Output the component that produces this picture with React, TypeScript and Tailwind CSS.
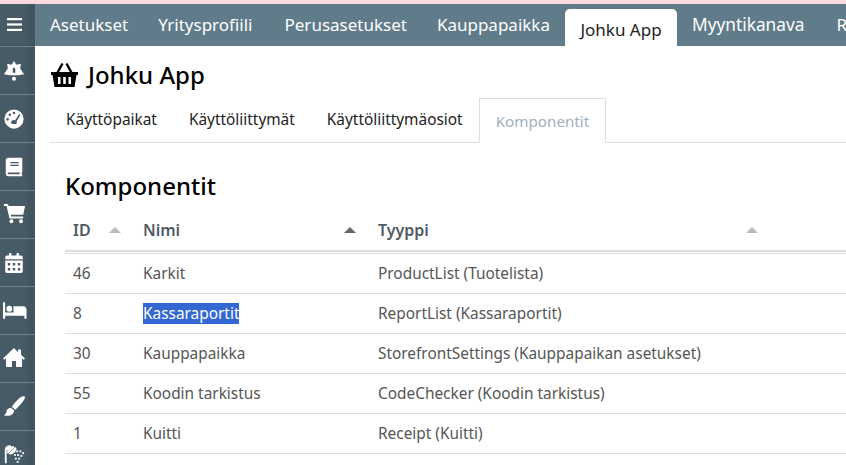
import type { ReactNode } from "react";
import { FaCalendarAlt } from "react-icons/fa";

function Ico({ w, y = 0, children }: { w: number; y?: number; children: ReactNode }) {
  return (
    <svg width={w} height={w} viewBox={`0 ${y} 24 24`} fill="currentColor">
      {children}
    </svg>
  );
}

const sideIcons: ReactNode[] = [
  <Ico w={22} key="a">
    <path fillRule="evenodd" d="M12 1l2.600 4.200L19.500 4l-.8 5.200L23 15.500l-6.500 1.200h-9L1 15.500l4.300-6.300L4.500 4l4.900 1.200zM12 8.500a1.400 1.400 0 0 0-1.400 1.400v4h2.800v-4A1.400 1.400 0 0 0 12 8.500z" />
    <circle cx="12" cy="20.500" r="2.200" />
  </Ico>,
  <Ico w={22} key="b">
    <path fillRule="evenodd" d="M12 1.500a10.500 10.500 0 1 0 0 21 10.500 10.500 0 0 0 0-21zM12 4a1.400 1.400 0 1 1 0 2.800A1.400 1.400 0 0 1 12 4zM7.500 6a1.400 1.400 0 1 1 0 2.800A1.400 1.400 0 0 1 7.500 6zM5 11a1.400 1.400 0 1 1 0 2.800A1.400 1.400 0 0 1 5 11zM17.600 6.600l1.400.9-4.200 7.200c.5 1 .3 2-.4 2.700H9.600c-1-1.100-.9-2.900.3-3.800.9-.7 2.200-.8 3.200-.1z" />
  </Ico>,
  <Ico w={22} key="c">
    <path fillRule="evenodd" d="M6 2h14a1 1 0 0 1 1 1v14.200c0 .4-.2.700-.5.900-.2.700-.2 1.300 0 2 .3.200.5.500.5.900v.5a.5.500 0 0 1-.5.500H6a3 3 0 0 1-3-3V5a3 3 0 0 1 3-3zM8 6.500v1.300h9V6.500zM8 9.500v1.300h9V9.500zM6 18c-.6 0-1 .4-1 1s.4 1 1 1h12.300c-.1-.7-.1-1.300 0-2z" />
  </Ico>,
  <Ico w={23} y={2} key="d">
    <path d="M1 3h4.200l.6 2.200H23l-1.900 9H8.100l.4 2H21v2H6.800L3.700 5H1z" />
    <circle cx="8.800" cy="21" r="2" />
    <circle cx="18.800" cy="21" r="2" />
  </Ico>,
  <FaCalendarAlt key="e" size={20} />,
  <Ico w={25} key="f">
    <path fillRule="evenodd" d="M1 4h2v10h8V8h9a3.500 3.500 0 0 1 3.500 3.500V20h-2v-3H3v3H1zM7 7.500a2.800 2.800 0 1 1 0 5.600 2.800 2.800 0 0 1 0-5.600z" />
  </Ico>,
  <Ico w={24} y={2} key="g">
    <path d="M12 3L1 13.500l1.300 1.300L4 13.200V22h6v-6h4v6h6v-8.800l1.700 1.600 1.300-1.300-4-3.800V4.500h-3v2.800z" />
  </Ico>,
  <Ico w={23} key="h">
    <path d="M22.500 1.500c-1.500-.8-3.500.2-5.500 2-2.800 2.500-5.800 6-7.800 8.800l3.600 3c2.800-2.500 6.300-6 8.300-9 1.500-2.300 2.500-3.800 1.400-4.800zM8 13.300c-2.800.3-4 2-4.300 4-.2 1.600-1 2.800-2.700 3.700 3 1.200 6.500 1 8.700-1 1.500-1.300 2-2.800 1.800-4z" />
  </Ico>,
  <Ico w={22} y={1} key="i">
    <path d="M2 22V7a4.500 4.500 0 0 1 7.800-3.100L11 3l1.500 1.500-7 7L4 10l1-1.200A2.500 2.500 0 0 0 4 7v15z" />
    <path d="M6 11.500L13.300 4.200c2 1.300 1.800 3.700-.3 5.800s-5 3.300-7 1.500z" />
    <rect x="14.500" y="8" width="2" height="2" />
    <rect x="18" y="8" width="2" height="2" />
    <rect x="21" y="10" width="2" height="2" />
    <rect x="12" y="12" width="2" height="2" />
    <rect x="15.500" y="12" width="2" height="2" />
    <rect x="19" y="13" width="2" height="2" />
    <rect x="13" y="16" width="2" height="2" />
    <rect x="16.500" y="16" width="2" height="2" />
    <rect x="15" y="19.500" width="2" height="2" />
  </Ico>,
];

const rows = [
  ["46", "Karkit", "ProductList (Tuotelista)"],
  ["8", "Kassaraportit", "ReportList (Kassaraportit)"],
  ["30", "Kauppapaikka", "StorefrontSettings (Kauppapaikan asetukset)"],
  ["55", "Koodin tarkistus", "CodeChecker (Koodin tarkistus)"],
  ["1", "Kuitti", "Receipt (Kuitti)"],
];

function Tri({ cls }: { cls: string }) {
  return <span className={`block w-0 h-0 border-x-[6px] border-x-transparent border-b-[6px] ${cls}`} />;
}

export default function App() {
  return (
    <div className="w-[846px] h-[465px] overflow-hidden bg-white flex flex-col font-['Noto_Sans','Open_Sans',sans-serif]">
      <div className="h-1 shrink-0 bg-[#fcd9de]" />
      <div className="flex flex-1 min-h-0">
        <aside className="w-[35px] shrink-0 bg-[#475b66] overflow-hidden">
          <div className="h-[42px] border-b border-[#3c4e58] flex text-white">
            <div className="w-[28px] flex items-center justify-center"><svg width="15" height="13" viewBox="0 0 15 13" fill="currentColor"><rect y="0" width="15" height="2.200" /><rect y="5.400" width="15" height="2.200" /><rect y="10.800" width="15" height="2.200" /></svg></div>
            <div className="flex-1 bg-[#42555f]" />
          </div>
          {sideIcons.map((icon, i) => (
            <div key={i} className="h-[48px] border-t border-[#6d828d] flex text-white">
              <div className="w-[28px] flex items-center justify-center">{icon}</div>
              <div className="flex-1 bg-[#42555f]" />
            </div>
          ))}
        </aside>
        <main className="flex-1 min-w-0 flex flex-col">
          <nav className="h-[42px] shrink-0 bg-[#607b89] flex items-end pl-[15px] whitespace-nowrap overflow-hidden text-white text-[17px]">
            <a className="shrink-0 h-[42px] leading-[42px] mr-[30px]">Asetukset</a>
            <a className="shrink-0 h-[42px] leading-[42px] mr-[32px]">Yritysprofiili</a>
            <a className="shrink-0 h-[42px] leading-[42px] mr-[30px]">Perusasetukset</a>
            <a className="shrink-0 h-[42px] leading-[42px] mr-[15px]">Kauppapaikka</a>
            <a className="shrink-0 h-[37px] leading-[41px] w-[112px] text-center rounded-t-[5px] bg-white text-[#222] mr-[15px]">Johku App</a>
            <a className="shrink-0 h-[42px] leading-[42px] mr-[32px] text-[17.300px]">Myyntikanava</a>
            <a className="shrink-0 h-[42px] leading-[42px]">R</a>
          </nav>
          <div className="pl-[16px] mt-[13px] flex items-center gap-[10px] h-[32px] text-[24px] font-medium text-black">
            <svg width="27" height="25" viewBox="0 0 27 25" fill="currentColor">
              <path fillRule="evenodd" d="M0 9h27v3h-1.500l-2 12H3.500l-2-12H0zM7 14v7h2.500v-7zM12.200 14v7h2.600v-7zM17.500 14v7H20v-7z" />
              <path d="M5.500 9L10.500 0l2 1-4.300 8zM21.500 9l-5-9-2 1 4.300 8z" />
            </svg>
            <h1>Johku App</h1>
          </div>
          <div className="ml-[15px] mt-[7px] h-[45px] flex border-b border-[#ddd] text-[15.400px] text-[#222]">
            <a className="px-[16px] leading-[44px]">Käyttöpaikat</a>
            <a className="px-[16px] leading-[44px]">Käyttöliittymät</a>
            <a className="px-[16px] leading-[44px]">Käyttöliittymäosiot</a>
            <a className="px-[16px] leading-[44px] h-[45px] text-[15.200px] text-[#9fb0c0] border border-b-white border-[#ddd]">Komponentit</a>
          </div>
          <div className="ml-[30px] mt-[26px]">
            <h2 className="text-[24px] font-medium leading-[34px] text-black">Komponentit</h2>
            <div className="mt-[9px] flex h-[40px] pb-[2px] items-center border-b-2 border-[#ddd] text-[16px] font-semibold text-[#505a64]">
              <div className="w-[70px] pl-[8px] pr-[14px] flex items-center justify-between">ID<Tri cls="border-b-[#bbb]" /></div>
              <div className="w-[235px] pl-[8px] pr-[14px] flex items-center justify-between">Nimi<Tri cls="border-b-[#666]" /></div>
              <div className="w-[400px] pl-[8px] pr-[12px] flex items-center justify-between">Tyyppi<Tri cls="border-b-[#bbb]" /></div>
            </div>
            <div className="mt-[1px] border-t border-[#ddd]">
              {rows.map((r, i) => (
                <div key={i} className="flex h-[40px] items-center border-b border-[#ddd] text-[15.400px] text-[#555]">
                  <div className="w-[70px] pl-[8px]">{r[0]}</div>
                  <div className="w-[235px] pl-[8px]">
                    <span className={i === 1 ? "bg-[#3367d1] text-white" : ""}>{r[1]}</span>
                  </div>
                  <div className="pl-[8px]">{r[2]}</div>
                </div>
              ))}
            </div>
          </div>
        </main>
      </div>
    </div>
  );
}
